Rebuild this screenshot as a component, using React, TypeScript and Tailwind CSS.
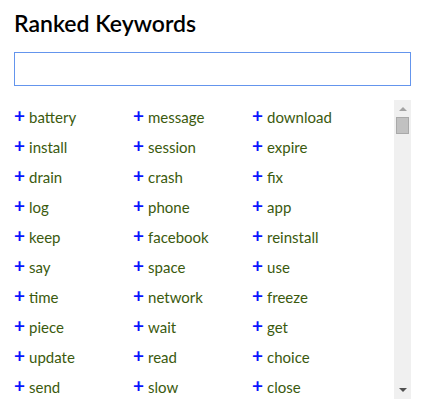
const keywords = [
  ["battery", "message", "download"],
  ["install", "session", "expire"],
  ["drain", "crash", "fix"],
  ["log", "phone", "app"],
  ["keep", "facebook", "reinstall"],
  ["say", "space", "use"],
  ["time", "network", "freeze"],
  ["piece", "wait", "get"],
  ["update", "read", "choice"],
  ["send", "slow", "close"],
];

function Keyword({ word }: { word: string }) {
  return (
    <div className="flex h-[30px] w-[119px] items-center">
      <span className="mr-[4px] -mt-[3px] text-[19px] font-bold leading-none text-[#0a14ff]">+</span>
      <span className="text-[15px] text-[#3b5a0e]">{word}</span>
    </div>
  );
}

/** Classic grey scrollbar, drawn beside the clipped list. */
function Scrollbar() {
  return (
    <div className="flex h-full w-[17px] shrink-0 flex-col items-center bg-[#f0f0f0]">
      <div className="mt-[7px] h-0 w-0 border-x-[4px] border-b-[4px] border-x-transparent border-b-[#a3a3a3]" />
      <div className="mt-[6px] h-[17px] w-[13px] border border-[#a9a9a9] bg-[#c1c1c1]" />
      <div className="flex-1" />
      <div className="mb-[7px] h-0 w-0 border-x-[4px] border-t-[4px] border-x-transparent border-t-[#505050]" />
    </div>
  );
}

export default function App() {
  return (
    <div className="h-[417px] w-[428px] bg-white px-[14px] pt-[8px] font-['Lato',sans-serif]">
      <h1 className="text-[23px] font-semibold leading-[30px] text-black">Ranked Keywords</h1>
      <input
        className="mt-[14px] block h-[34px] w-[397px] border border-[#6495ed] bg-white px-2 text-[15px] outline-none"
        type="text"
      />
      <div className="mt-[14px] flex h-[299px] w-[397px]">
        <div className="flex-1 overflow-hidden pt-[2px]">
          {keywords.map((row, i) => (
            <div key={i} className="flex">
              {row.map((w) => (
                <Keyword key={w} word={w} />
              ))}
            </div>
          ))}
        </div>
        <Scrollbar />
      </div>
    </div>
  );
}
